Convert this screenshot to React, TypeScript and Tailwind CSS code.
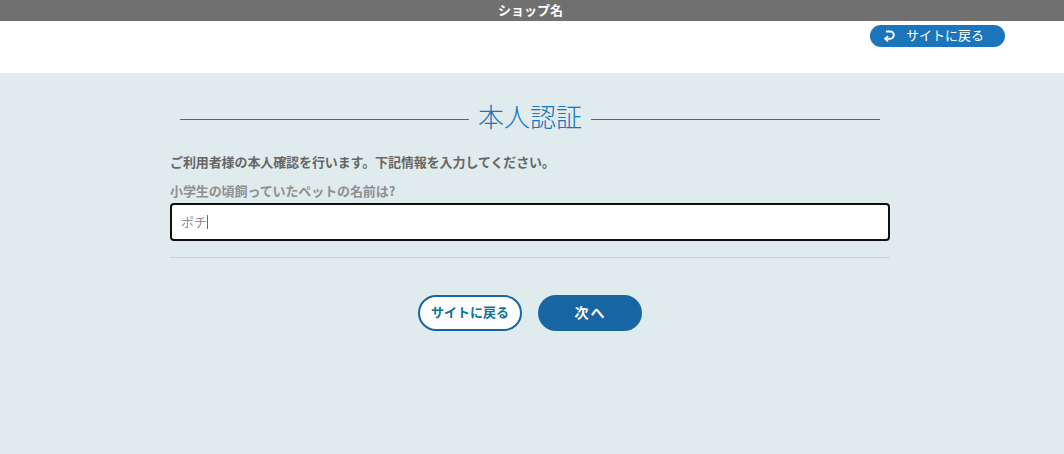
const font = "[font-family:'Noto_Sans_CJK_JP','Liberation_Sans',sans-serif]"

export default function App() {
  return (
    <div className={`h-[454px] w-[1064px] overflow-hidden bg-[#e0ebee] ${font}`}>
      <header className="flex h-[21px] items-center justify-center bg-[#707070] pr-[3px] pb-[2px] text-[13px] font-bold text-white">
        ショップ名
      </header>

      <div className="flex h-[52px] justify-end bg-white pt-1 pr-[59px]">
        <a className="flex h-[22px] w-[135px] items-center rounded-full bg-[#1a75bb] pb-[2px] pl-[13px] text-[13px] text-white">
          <svg width="12" height="13" viewBox="0 0 12 13" fill="none" stroke="currentColor" strokeWidth="2" className="mt-[2px] mr-[11px]">
            <path d="M3 1.5h4.2a3.6 3.6 0 0 1 0 7.2H3" />
            <path d="M5 6.2 2 8.8l3 2.6" strokeWidth="1.6" />
          </svg>
          サイトに戻る
        </a>
      </div>

      <main className="ml-[170px] w-[720px] pt-[24px]">
        <div className="flex h-[44px] items-center px-[10px]">
          <div className="h-px flex-1 bg-[#1a75bb]" />
          <h1 className="px-[9px] pb-[7px] text-[26px] leading-none font-light text-[#1a75bb]">本人認証</h1>
          <div className="h-px flex-1 bg-[#1a75bb]" />
        </div>

        <p className="mt-[11px] text-[13px] leading-[20px] font-bold tracking-[-0.1px] text-[#666666]">
          ご利用者様の本人確認を行います。下記情報を入力してください。
        </p>
        <label className="mt-[9px] block text-[13px] leading-[20px] font-bold tracking-[-0.1px] text-[#8f8f8f]">
          小学生の頃飼っていたペットの名前は?
        </label>
        <div className="mt-[2px] flex h-[38px] items-center rounded-[4px] border-2 border-[#101010] bg-white pl-[9px] text-[13px] text-[#8a8f98]">
          ポチ
          <span className="h-[14px] w-px bg-[#5a6a80]" />
        </div>

        <hr className="mt-[16px] border-[#c8d2d4]" />

        <div className="mt-[37px] flex justify-center gap-4">
          <button className="h-[36px] w-[104px] rounded-full border-2 border-[#1766a3] bg-white pb-[2px] text-[13px] font-bold text-[#0f7396]">
            サイトに戻る
          </button>
          <button className="h-[36px] w-[104px] rounded-full bg-[#1766a3] pb-[2px] pl-[1px] text-[14px] font-bold tracking-[2px] text-white">
            次へ
          </button>
        </div>
      </main>
    </div>
  )
}
